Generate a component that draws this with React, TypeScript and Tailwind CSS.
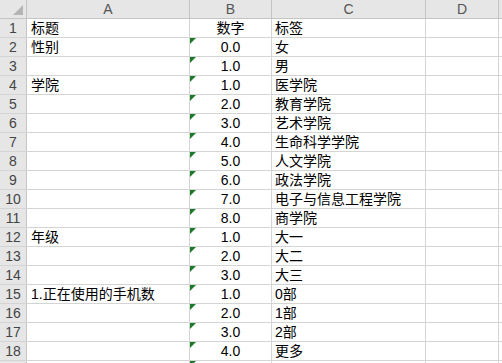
import React from "react";

// Sheet data: [A, B, C]
const rows: [string, string, string][] = [
  ["标题", "数字", "标签"],
  ["性别", "0.0", "女"],
  ["", "1.0", "男"],
  ["学院", "1.0", "医学院"],
  ["", "2.0", "教育学院"],
  ["", "3.0", "艺术学院"],
  ["", "4.0", "生命科学学院"],
  ["", "5.0", "人文学院"],
  ["", "6.0", "政法学院"],
  ["", "7.0", "电子与信息工程学院"],
  ["", "8.0", "商学院"],
  ["年级", "1.0", "大一"],
  ["", "2.0", "大二"],
  ["", "3.0", "大三"],
  ["1.正在使用的手机数", "1.0", "0部"],
  ["", "2.0", "1部"],
  ["", "3.0", "2部"],
  ["", "4.0", "更多"],
];

const font = "font-['Liberation_Sans','Noto_Sans_CJK_SC',sans-serif]";

// green "number stored as text" marker in the cell corner
function TextFlag() {
  return (
    <svg className="absolute left-0 top-0" width="6" height="6" viewBox="0 0 6 6">
      <polygon points="0,0 6,0 0,6" fill="#1e7a2a" />
    </svg>
  );
}

export default function App() {
  return (
    <div className={`w-[502px] h-[363px] overflow-hidden bg-white text-[14px] leading-none ${font}`}>
      {/* column headers */}
      <div className="flex h-[19px] bg-[#e6e6e6] border-b border-[#c4c4c4]">
        <div className="relative w-[27px] shrink-0 border-r border-[#c4c4c4]">
          <svg className="absolute right-[3px] bottom-[3px]" width="10" height="10" viewBox="0 0 10 10">
            <polygon points="10,0 10,10 0,10" fill="#b4b4b4" />
          </svg>
        </div>
        <div className="w-[163px] shrink-0 border-r border-[#c4c4c4] flex items-center justify-center text-[#555]">A</div>
        <div className="w-[82px] shrink-0 border-r border-[#c4c4c4] flex items-center justify-center text-[#555]">B</div>
        <div className="w-[154px] shrink-0 border-r border-[#c4c4c4] flex items-center justify-center text-[#555]">C</div>
        <div className="w-[73px] shrink-0 border-r border-[#c4c4c4] flex items-center justify-center text-[#555]">D</div>
        <div className="flex-1" />
      </div>

      {rows.map((r, i) => (
        <div key={i} className="flex h-[19px] border-b border-[#d4d4d4]">
          <div className="w-[27px] shrink-0 bg-[#e6e6e6] border-r border-[#c4c4c4] flex items-center justify-center text-[#444]">
            {i + 1}
          </div>
          <div className="w-[163px] shrink-0 border-r border-[#d4d4d4] flex items-center pl-[4px] text-black whitespace-nowrap">
            {r[0]}
          </div>
          <div className="relative w-[82px] shrink-0 border-r border-[#d4d4d4] flex items-center justify-center text-black">
            {i > 0 && <TextFlag />}
            {r[1]}
          </div>
          <div className="w-[154px] shrink-0 border-r border-[#d4d4d4] flex items-center pl-[3px] text-black whitespace-nowrap">
            {r[2]}
          </div>
          <div className="w-[73px] shrink-0 border-r border-[#d4d4d4]" />
          <div className="flex-1" />
        </div>
      ))}

      {/* next row, only its top edge is in view */}
      <div className="flex h-[19px]">
        <div className="w-[27px] shrink-0 bg-[#e6e6e6] border-r border-[#c4c4c4]" />
        <div className="w-[163px] shrink-0 border-r border-[#d4d4d4]" />
        <div className="relative w-[82px] shrink-0 border-r border-[#d4d4d4]">
          <TextFlag />
        </div>
        <div className="w-[154px] shrink-0 border-r border-[#d4d4d4]" />
        <div className="w-[73px] shrink-0 border-r border-[#d4d4d4]" />
        <div className="flex-1" />
      </div>
    </div>
  );
}
